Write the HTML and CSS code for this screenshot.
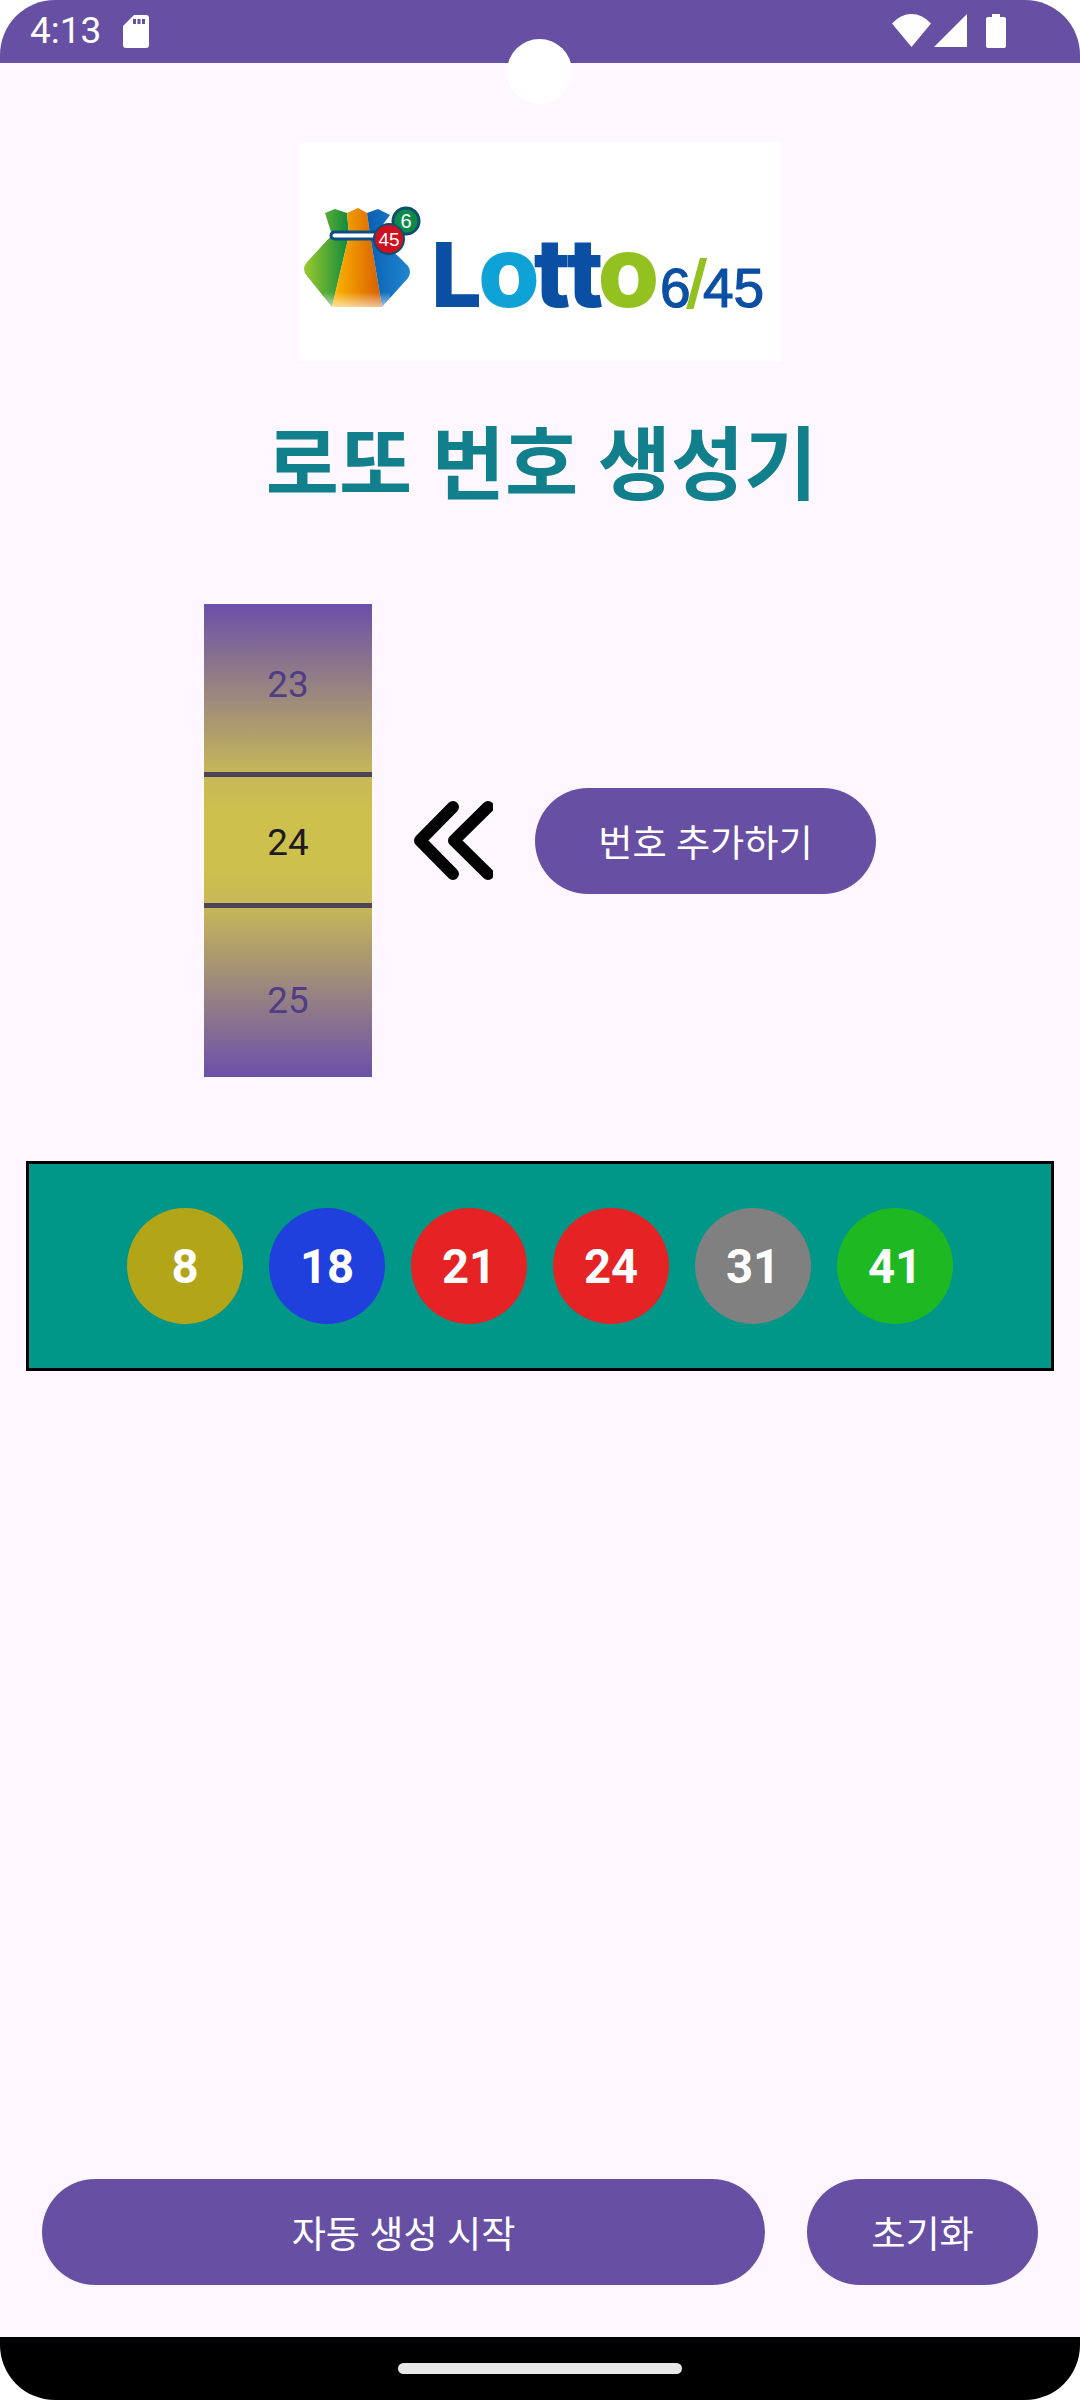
FILE: index.html
```html
<!DOCTYPE html>
<html lang="ko">
<head>
<meta charset="UTF-8" />
<meta name="viewport" content="width=device-width, initial-scale=1" />
<title>로또 번호 생성기</title>
<link rel="stylesheet" href="styles.css">
</head>
<body>
  <div class="screen">
    <div class="status-bar">
      <div class="status-left">
        <span class="clock">4:13</span>
        <svg class="icon-sd" width="26" height="33" viewBox="0 0 26 33">
          <path fill="#fff" d="M11 0H23Q26 0 26 3V30Q26 33 23 33H3Q0 33 0 30V11Z" />
          <path fill="#6750a4" d="M10 4h3v5h-3zM14.5 4h3v5h-3zM19 4h3v5h-3z" />
        </svg>
      </div>
      <div class="status-right">
        <svg width="39" height="33" viewBox="0 0 39 33"><path fill="#fff" d="M0 9.5Q8.5 0 19.5 0T39 9.5L19.5 33Z" /></svg>
        <svg width="33" height="33" viewBox="0 0 33 33"><path fill="#fff" d="M33 0V33H0Z" /></svg>
        <svg class="icon-battery" width="20" height="34" viewBox="0 0 20 34"><path fill="#fff" d="M6 0H14V3H18Q20 3 20 5V32Q20 34 18 34H2Q0 34 0 32V5Q0 3 2 3H6Z" /></svg>
      </div>
    </div>
    <div class="camera"></div>

    <main class="content">
      <div class="logo">
        <svg width="482" height="219" viewBox="0 0 482 219">
          <defs>
            <linearGradient id="bagGreen" x1="0" x2="1" y1="0" y2="0">
              <stop offset="0" stop-color="#9cc92e" />
              <stop offset="1" stop-color="#0f8a3c" />
            </linearGradient>
            <linearGradient id="bagOrange" x1="0" x2="1" y1="0" y2="0">
              <stop offset="0" stop-color="#ffb800" />
              <stop offset="1" stop-color="#d65c00" />
            </linearGradient>
            <linearGradient id="bagBlue" x1="0" x2="1" y1="0" y2="0">
              <stop offset="0" stop-color="#0b5fb0" />
              <stop offset="1" stop-color="#1f86d0" />
            </linearGradient>
            <linearGradient id="bagFade" x1="0" x2="0" y1="0" y2="1">
              <stop offset="0" stop-color="#fff" stop-opacity="0" />
              <stop offset="1" stop-color="#fff" stop-opacity="0.65" />
            </linearGradient>
          </defs>
          <path fill="url(#bagGreen)" d="M26 71L36 67L48 71L50 93L33 165L8 134Q2 127 8 120L33 93Z" />
          <path fill="url(#bagOrange)" d="M48 71L59 66L68 71L71 93L83 165H33L50 93Z" />
          <path fill="url(#bagBlue)" d="M68 71L79 67L91 73L76 93L101 116L109 124Q113 130 109 136L83 165L71 93Z" />
          <rect fill="url(#bagFade)" x="25" y="150" width="66" height="16" />
          <rect fill="#fff" stroke="#0b4f86" stroke-width="3" x="32" y="90" width="50" height="7" rx="3.5" />
          <circle cx="107" cy="79" r="13" fill="#0d8a4a" stroke="#0b4f6e" stroke-width="3" />
          <text class="logo-ball" x="107" y="86" font-size="20" text-anchor="middle">6</text>
          <circle cx="90" cy="97" r="15" fill="#cf1020" stroke="#0b4f6e" stroke-width="2" />
          <text class="logo-ball" x="90" y="104" font-size="19" text-anchor="middle">45</text>
          <text class="logo-word" x="132" y="165" font-size="90">
            <tspan fill="#0a4fa3">L</tspan><tspan dx="-4" font-size="100" fill="#0fa2d6">o</tspan><tspan dx="-6" font-size="96" fill="#0a4fa3">tt</tspan><tspan dx="-6" font-size="100" fill="#93c11f">o</tspan>
          </text>
          <text class="logo-num" x="361" y="165" font-size="55">
            <tspan fill="#0a4fa3" stroke="#0a4fa3" stroke-width="1.2">6</tspan><tspan dx="-3" font-size="66" fill="#93c11f" stroke="#93c11f" stroke-width="2">/</tspan><tspan dx="-3" fill="#0a4fa3" stroke="#0a4fa3" stroke-width="1.2">45</tspan>
          </text>
        </svg>
      </div>

      <h1 class="title">로또 번호 생성기</h1>

      <div class="picker-row">
        <div class="picker">
          <div class="picker-item picker-prev">23</div>
          <div class="picker-divider"></div>
          <div class="picker-item picker-current">24</div>
          <div class="picker-divider"></div>
          <div class="picker-item picker-next">25</div>
        </div>
        <svg class="arrows" width="79" height="79" viewBox="0 0 79 79">
          <path d="M39 6L6 39.5L39 73M74 6L40 39.5L74 73" fill="none" stroke="#000" stroke-width="12" stroke-linecap="round" stroke-linejoin="round" />
        </svg>
        <button class="pill add-btn" type="button">번호 추가하기</button>
      </div>

      <div class="ball-panel">
        <div class="ball ball-yellow">8</div>
        <div class="ball ball-blue">18</div>
        <div class="ball ball-red">21</div>
        <div class="ball ball-red">24</div>
        <div class="ball ball-gray">31</div>
        <div class="ball ball-green">41</div>
      </div>

      <div class="actions">
        <button class="pill start-btn" type="button">자동 생성 시작</button>
        <button class="pill reset-btn" type="button">초기화</button>
      </div>
    </main>

    <div class="nav-bar">
      <div class="home-pill"></div>
    </div>
  </div>
</body>
</html>
```

FILE: styles.css
```css
* {
  box-sizing: border-box;
}
body {
  margin: 0;
  background: #fff;
  font-family: Roboto, "Noto Sans CJK KR", sans-serif;
}
.screen {
  position: relative;
  width: 1080px;
  height: 2400px;
  display: flex;
  flex-direction: column;
  background: #fef7ff;
  border-radius: 55px;
  overflow: hidden;
}

/* Status bar */
.status-bar {
  height: 63px;
  flex: none;
  background: #6750a4;
  display: flex;
  justify-content: space-between;
  align-items: flex-start;
  padding: 14px 74px 0 30px;
  color: #fff;
}
.status-left {
  display: flex;
  align-items: center;
  gap: 22px;
}
.status-right {
  display: flex;
  gap: 3px;
}
.icon-sd {
  margin-top: 1px;
}
.icon-battery {
  margin-left: 16px;
}
.clock {
  font-size: 37px;
  line-height: 34px;
}
.camera {
  position: absolute;
  left: 507px;
  top: 39px;
  width: 65px;
  height: 65px;
  border-radius: 50%;
  background: #fff;
}

/* Main content */
.content {
  flex: 1;
  display: flex;
  flex-direction: column;
  padding-top: 79px;
}
.logo {
  width: 482px;
  height: 219px;
  margin: 0 auto;
  background: #fff;
}
.logo svg {
  display: block;
}
.logo-word {
  font-family: Inter, sans-serif;
  font-weight: 800;
}
.logo-num {
  font-family: "Liberation Sans", sans-serif;
}
.logo-ball {
  font-family: "Liberation Sans", sans-serif;
  fill: #fff;
}
.title {
  margin: 50px 0 0;
  padding-left: 3px;
  height: 110px;
  font-size: 79.5px;
  line-height: 110px;
  font-weight: 700;
  text-align: center;
  color: #117f8c;
}

/* Number picker */
.picker-row {
  display: flex;
  align-items: center;
  margin-top: 83px;
  padding-left: 204px;
}
.picker {
  width: 168px;
  height: 473px;
  display: flex;
  flex-direction: column;
  background: linear-gradient(#6b50a9 0%, #c6b858 36%, #cdc04d 44%, #cdc04d 56%, #c6b858 64%, #6b50a9 100%);
}
.picker-item {
  display: flex;
  align-items: center;
  justify-content: center;
  font-size: 36.75px;
  color: #4f3d85;
}
.picker-prev {
  height: 168px;
  padding-bottom: 8px;
}
.picker-current {
  height: 126px;
  padding-top: 4px;
  color: #1d1b20;
}
.picker-next {
  height: 169px;
  padding-top: 16px;
}
.picker-divider {
  height: 5px;
  background: #4d4458;
}
.arrows {
  margin-left: 42px;
}
.pill {
  height: 106px;
  border: none;
  border-radius: 53px;
  background: #6750a4;
  color: #fff;
  font-family: inherit;
  font-size: 37.2px;
  padding: 0;
}
.add-btn {
  width: 341px;
  margin-left: 42px;
}

/* Result balls */
.ball-panel {
  height: 210px;
  margin: 84px 26px 0;
  border: 3px solid #000;
  background: #009688;
  display: flex;
  align-items: center;
  justify-content: center;
  gap: 26px;
}
.ball {
  width: 116px;
  height: 116px;
  padding-top: 2px;
  border-radius: 50%;
  display: flex;
  align-items: center;
  justify-content: center;
  color: #fff;
  font-size: 47.25px;
  font-weight: 700;
}
.ball-yellow {
  background: #b3a518;
}
.ball-blue {
  background: #2040dd;
}
.ball-red {
  background: #e62324;
}
.ball-gray {
  background: #808080;
}
.ball-green {
  background: #1eb822;
}

/* Bottom buttons */
.actions {
  margin-top: auto;
  padding: 0 42px 52px;
  display: flex;
  gap: 42px;
}
.start-btn {
  flex: 1;
}
.reset-btn {
  width: 231px;
}

/* Navigation bar */
.nav-bar {
  height: 63px;
  flex: none;
  background: #000;
  display: flex;
  justify-content: center;
  padding-top: 26px;
}
.home-pill {
  width: 284px;
  height: 11px;
  border-radius: 6px;
  background: #e8e8e8;
}
```
